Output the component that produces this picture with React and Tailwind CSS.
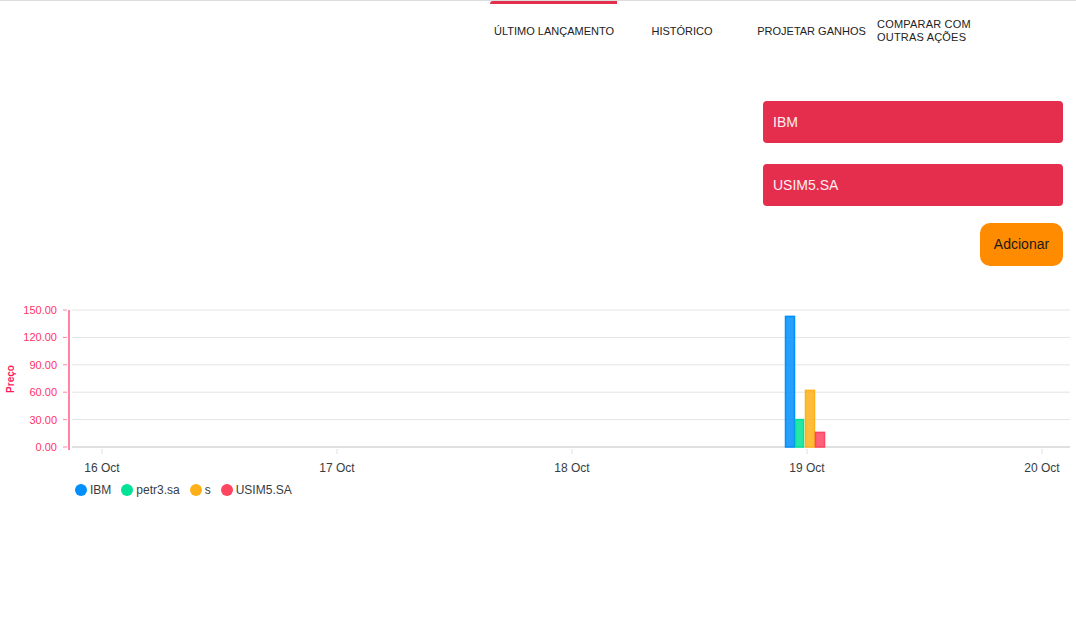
import React from 'react';

const tabs = [
  { label: 'ÚLTIMO LANÇAMENTO', active: true },
  { label: 'HISTÓRICO' },
  { label: 'PROJETAR GANHOS' },
  { label: 'COMPARAR COM OUTRAS AÇÕES', wrap: true },
];

const series = [
  { name: 'IBM', color: '#008FFB', value: 143, x: 785, w: 10 },
  { name: 'petr3.sa', color: '#00E396', value: 30, x: 795, w: 9 },
  { name: 's', color: '#FEB019', value: 62, x: 805, w: 10 },
  { name: 'USIM5.SA', color: '#FF4560', value: 16, x: 815, w: 10 },
];

const yTicks = [150, 120, 90, 60, 30, 0];
const xTicks = [
  { label: '16 Oct', x: 102 },
  { label: '17 Oct', x: 337 },
  { label: '18 Oct', x: 572 },
  { label: '19 Oct', x: 807 },
  { label: '20 Oct', x: 1042 },
];

// chart svg starts at page y=300
const top = 10;
const base = 147;
const yFor = (v) => base - (v / 150) * (base - top);

const Chart = () => (
  <svg width="1076" height="180" className="block">
    {yTicks.map((v) => (
      <g key={v}>
        <line x1="72" x2="1070" y1={yFor(v)} y2={yFor(v)} stroke="#e5e5e5" strokeWidth="1" />
        <line x1="63" x2="67" y1={yFor(v)} y2={yFor(v)} stroke="#ff85a2" strokeWidth="1" />
        <text
          x="57"
          y={yFor(v) + 4}
          textAnchor="end"
          fontSize="11"
          fill="#ff3366"
          fontFamily="Liberation Sans, Arial, sans-serif"
        >
          {v.toFixed(2)}
        </text>
      </g>
    ))}
    <line x1="72" x2="1070" y1={base} y2={base} stroke="#e0e0e0" strokeWidth="2" />
    <line x1="69" x2="69" y1={top} y2={base + 3} stroke="#ff85a2" strokeWidth="2" />
    {xTicks.map((t) => (
      <g key={t.label}>
        <line x1={t.x} x2={t.x} y1={base + 2} y2={base + 7} stroke="#e0e0e0" strokeWidth="1" />
        <text
          x={t.x}
          y="172"
          textAnchor="middle"
          fontSize="12"
          fill="#373d3f"
          fontFamily="Liberation Sans, Arial, sans-serif"
        >
          {t.label}
        </text>
      </g>
    ))}
    {series.map((s) => (
      <rect
        key={s.name}
        x={s.x + 0.5}
        y={yFor(s.value)}
        width={s.w - 1}
        height={base - yFor(s.value)}
        fill={s.color}
        fillOpacity="0.85"
        stroke={s.color}
        strokeWidth="1.5"
      />
    ))}
    <text
      x="10"
      y="75"
      transform="rotate(-90 14 75)"
      textAnchor="middle"
      fontSize="10"
      fontWeight="bold"
      fill="#ff1a5c"
      fontFamily="Liberation Sans, Arial, sans-serif"
    >
      Preço
    </text>
  </svg>
);

export default function App() {
  return (
    <div className="w-[1076px] h-[620px] bg-white font-['Liberation_Sans',Arial,sans-serif] overflow-hidden">
      <div className="border-t border-[#dcdcdc] flex h-[62px] pl-[490px]">
        {tabs.map((t) => (
          <div
            key={t.label}
            className={`relative w-[128px] h-full flex items-center text-[11px] leading-[13px] text-[#222] ${
              t.wrap ? 'justify-start pl-[3px] text-left pb-[1px]' : 'justify-center'
            }`}
          >
            {t.active && (
              <div className="absolute top-0 left-0 w-[127px] h-[3px] bg-[#e52e4d] rounded-tl-[6px]" />
            )}
            <span className={t.wrap ? 'w-[100px] tracking-[0.2px]' : t.label === 'PROJETAR GANHOS' ? 'pl-[3px]' : ''}>
              {t.label}
            </span>
          </div>
        ))}
      </div>

      <div className="flex flex-col items-end pr-[13px] mt-[39px]">
        <div className="w-[300px] h-[42px] rounded-[4px] bg-[#e52e4d] flex items-center px-[10px] text-[14px] text-[#fdeef1]">
          IBM
        </div>
        <div className="w-[300px] h-[42px] rounded-[4px] bg-[#e52e4d] flex items-center px-[10px] text-[14px] text-[#fdeef1] mt-[21px]">
          USIM5.SA
        </div>
        <button className="mt-[17px] w-[83px] h-[43px] rounded-[10px] bg-[#ff8c00] text-[14px] text-[#1a1a1a]">
          Adcionar
        </button>
      </div>

      <div className="mt-[34px]">
        <Chart />
        <div className="flex items-center pl-[75px] mt-[3px] text-[12px] text-[#373d3f] h-[14px]">
          {series.map((s) => (
            <div key={s.name} className="flex items-center mr-[10px]">
              <span className="w-[12px] h-[12px] rounded-full mr-[3px]" style={{ backgroundColor: s.color }} />
              <span>{s.name}</span>
            </div>
          ))}
        </div>
      </div>
    </div>
  );
}
